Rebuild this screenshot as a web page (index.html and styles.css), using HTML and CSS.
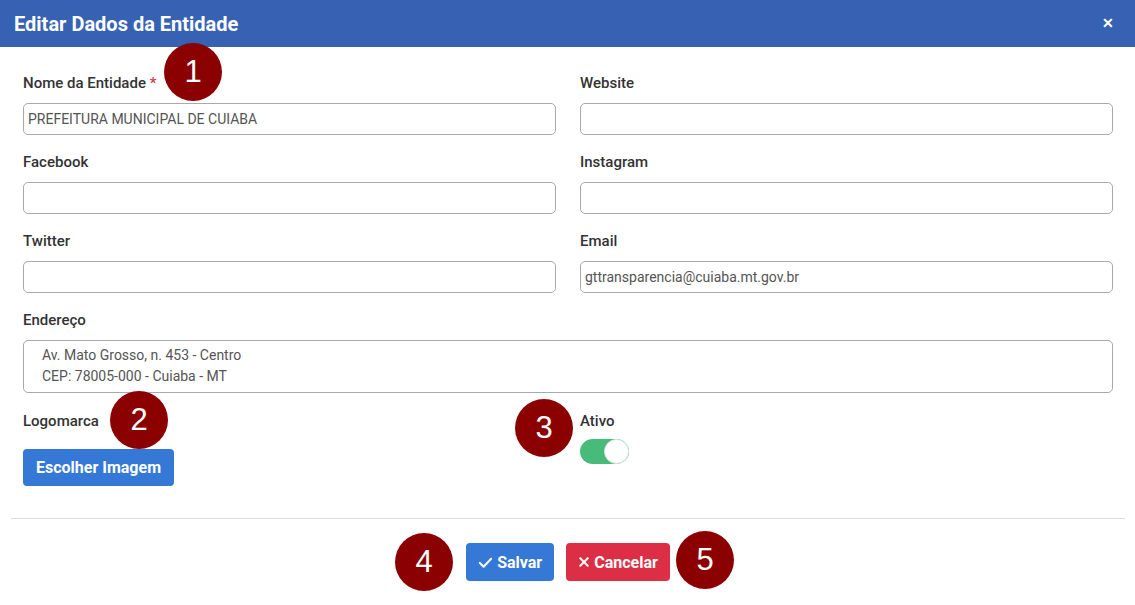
FILE: index.html
```html
<!DOCTYPE html>
<html lang="pt-BR">
<head>
  <meta charset="UTF-8">
  <title>Editar Dados da Entidade</title>
  <link rel="stylesheet" href="styles.css">
</head>
<body>
  <div class="modal">
    <div class="modal-header">
      <h1 class="modal-title">Editar Dados da Entidade</h1>
      <span class="close-btn">&#x2715;</span>
    </div>
    <div class="modal-body">
      <div class="form-grid">
        <div class="field">
          <label>Nome da Entidade <span class="required">*</span></label>
          <input type="text" value="PREFEITURA MUNICIPAL DE CUIABA">
        </div>
        <div class="field">
          <label>Website</label>
          <input type="text" value="">
        </div>
        <div class="field">
          <label>Facebook</label>
          <input type="text" value="">
        </div>
        <div class="field">
          <label>Instagram</label>
          <input type="text" value="">
        </div>
        <div class="field">
          <label>Twitter</label>
          <input type="text" value="">
        </div>
        <div class="field">
          <label>Email</label>
          <input type="text" value="gttransparencia@cuiaba.mt.gov.br">
        </div>
        <div class="field field-wide">
          <label>Endereço</label>
          <textarea>Av. Mato Grosso, n. 453 - Centro
CEP: 78005-000 - Cuiaba - MT</textarea>
        </div>
        <div class="field field-last">
          <label>Logomarca</label>
          <div><button class="btn btn-primary btn-upload">Escolher Imagem</button></div>
        </div>
        <div class="field field-last">
          <label>Ativo</label>
          <div class="toggle"><span class="toggle-knob"></span></div>
        </div>
      </div>
    </div>
    <div class="modal-footer">
      <button class="btn btn-primary">
        <svg class="btn-icon" viewBox="0 0 16 16" width="15" height="15"><path d="M2 8.5 L6 12.5 L14 4" fill="none" stroke="#fff" stroke-width="2.2" stroke-linecap="round" stroke-linejoin="round"/></svg>
        Salvar
      </button>
      <button class="btn btn-danger">
        <svg class="btn-icon" viewBox="0 0 16 16" width="12" height="12"><path d="M3 3 L13 13 M13 3 L3 13" fill="none" stroke="#fff" stroke-width="2.6" stroke-linecap="round"/></svg>
        Cancelar
      </button>
    </div>
  </div>

  <span class="badge badge-1">1</span>
  <span class="badge badge-2">2</span>
  <span class="badge badge-3">3</span>
  <span class="badge badge-4">4</span>
  <span class="badge badge-5">5</span>
</body>
</html>
```

FILE: styles.css
```css
body {
  margin: 0;
  padding: 0;
  background-color: #fff;
  font-family: Roboto, "Liberation Sans", Arial, sans-serif;
  color: #333;
  position: relative;
  width: 1135px;
  height: 605px;
  overflow: hidden;
}
.modal {
  width: 100%;
}
.modal-header {
  height: 47px;
  background-color: #3762b4;
  display: flex;
  align-items: center;
  justify-content: space-between;
  padding: 0 21px 0 14px;
}
.modal-title {
  margin: 0;
  color: #fff;
  font-size: 20px;
  font-weight: 700;
}
.close-btn {
  color: #fff;
  font-size: 14px;
  font-weight: 700;
  margin-top: -2px;
}
.modal-body {
  padding: 26px 22px 0 23px;
}
.form-grid {
  display: grid;
  grid-template-columns: 1fr 1fr;
  column-gap: 24px;
}
.field {
  display: flex;
  flex-direction: column;
  margin-bottom: 17px;
}
.field-wide {
  grid-column: 1 / 3;
  margin-bottom: 18px;
}
.field-last {
  margin-bottom: 0;
}
label {
  font-size: 15px;
  font-weight: 500;
  line-height: 20px;
  color: #333;
  margin-bottom: 10px;
}
.required {
  color: #dc3545;
}
input[type="text"],
textarea {
  box-sizing: border-box;
  width: 100%;
  height: 32px;
  border: 1px solid #aaa;
  border-radius: 5px;
  padding: 0 4px;
  font-family: Roboto, "Liberation Sans", Arial, sans-serif;
  font-size: 14px;
  font-weight: 400;
  color: #555;
  background: #fff;
  outline: none;
}
textarea {
  height: 53px;
  padding: 4px 18px;
  line-height: 21px;
  resize: none;
  overflow: hidden;
}
.field-last label {
  margin-bottom: 8px;
}
.btn {
  border: none;
  border-radius: 4px;
  color: #fff;
  font-family: Roboto, "Liberation Sans", Arial, sans-serif;
  font-size: 16px;
  font-weight: 700;
  height: 38px;
  padding: 0 12px;
  display: inline-flex;
  align-items: center;
  gap: 4px;
  cursor: pointer;
}
.btn-primary {
  background-color: #3578d6;
}
.btn-danger {
  background-color: #dc2f45;
}
.btn-upload {
  margin-top: 10px;
  height: 37px;
  padding: 0 13px;
}
.toggle {
  width: 49px;
  height: 25px;
  border-radius: 13px;
  background-color: #48bb7b;
  position: relative;
}
.toggle-knob {
  position: absolute;
  right: 0;
  top: 0;
  width: 23px;
  height: 23px;
  border-radius: 50%;
  background: #fff;
  border: 1px solid #d8e8de;
}
.modal-footer {
  margin: 32px 10px 0 11px;
  border-top: 1px solid #ddd;
  padding-top: 24px;
  display: flex;
  justify-content: center;
  gap: 12px;
}
.btn-icon {
  display: block;
}
.badge {
  position: absolute;
  width: 58px;
  height: 58px;
  border-radius: 50%;
  background-color: #8b0000;
  color: #fff;
  font-family: "Liberation Sans", Arial, sans-serif;
  font-size: 31px;
  display: flex;
  align-items: center;
  justify-content: center;
}
.badge-1 { left: 164px; top: 43px; }
.badge-2 { left: 110px; top: 391px; }
.badge-3 { left: 515px; top: 399px; }
.badge-4 { left: 395px; top: 533px; }
.badge-5 { left: 676px; top: 531px; }
```
